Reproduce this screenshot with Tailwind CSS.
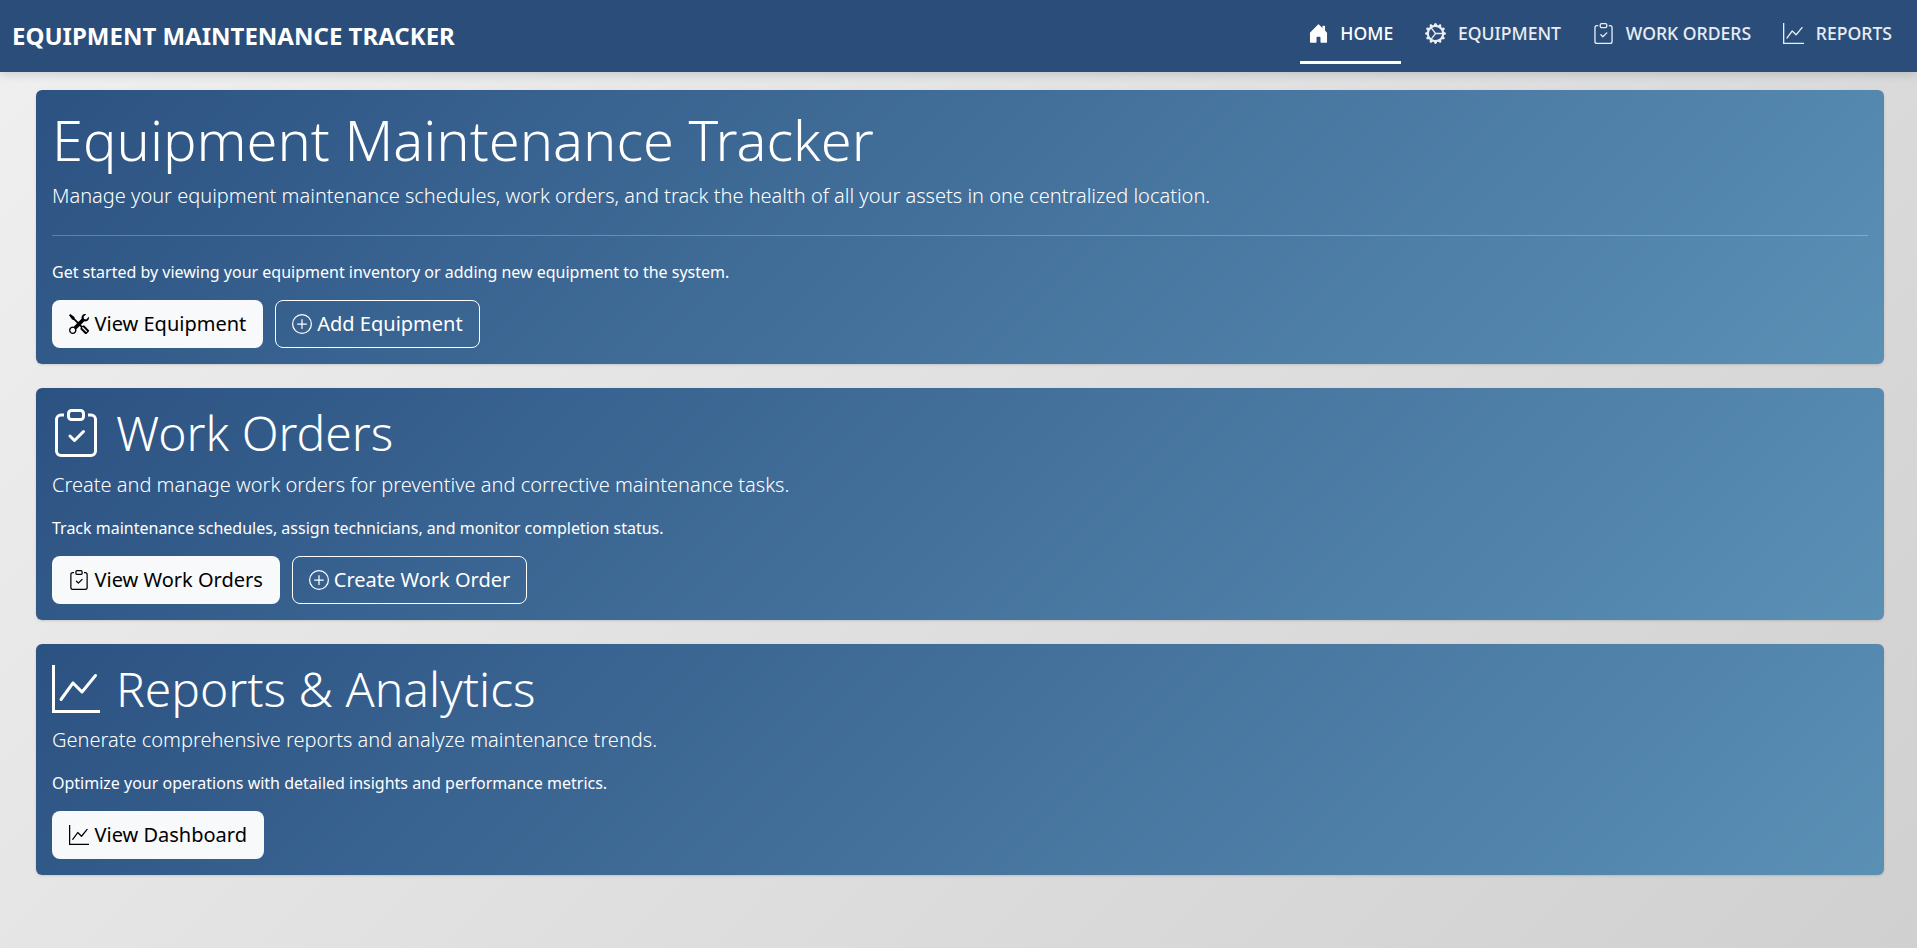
<!DOCTYPE html>
<html lang="en">
<head>
  <meta charset="UTF-8" />
  <meta name="viewport" content="width=device-width, initial-scale=1.0" />
  <title>Equipment Maintenance Tracker</title>
  <script src="https://cdn.jsdelivr.net/npm/@tailwindcss/browser@4"></script>
</head>
<body class="min-h-screen bg-[linear-gradient(135deg,#f0f0f0,#d0d0d0)] font-['Noto_Sans',sans-serif] text-white">
  <!-- top bar -->
  <nav class="flex h-[72px] items-center justify-between bg-[#2a4d7a] pl-3 pr-[17px] shadow-[0_2px_10px_rgba(0,0,0,0.15)]">
    <a class="text-2xl font-bold uppercase" href="#">Equipment Maintenance Tracker</a>
    <div class="flex gap-4">
      <a class="flex h-14 items-center gap-[11.75px] border-b-[3px] border-white px-2 pb-[2px] text-[17.6px] font-medium" href="#">
        <svg class="h-[21px] w-[21px]" viewBox="0 0 16 16" fill="currentColor"><path d="M6.5 14.5v-3.505c0-.245.25-.495.5-.495h2c.25 0 .5.25.5.5v3.5a.5.5 0 0 0 .5.5h4a.5.5 0 0 0 .5-.5v-7a.5.5 0 0 0-.146-.354L13 5.793V2.5a.5.5 0 0 0-.5-.5h-1a.5.5 0 0 0-.5.5v1.293L8.354 1.146a.5.5 0 0 0-.708 0l-6 6A.5.5 0 0 0 1.5 7.5v7a.5.5 0 0 0 .5.5h4a.5.5 0 0 0 .5-.5Z"/></svg>
        HOME
      </a>
      <a class="flex h-14 items-center gap-[11.75px] border-b-[3px] border-transparent px-2 pb-[2px] text-[17.6px] font-medium text-white/90" href="#">
        <svg class="h-[21px] w-[21px]" viewBox="0 0 16 16" fill="currentColor"><path d="M7.068.727c.243-.97 1.62-.97 1.864 0l.071.286a.96.96 0 0 0 1.622.434l.205-.211c.695-.719 1.888-.03 1.613.931l-.08.284a.96.96 0 0 0 1.187 1.187l.283-.081c.96-.275 1.65.918.931 1.613l-.211.205a.96.96 0 0 0 .434 1.622l.286.071c.97.243.97 1.62 0 1.864l-.286.071a.96.96 0 0 0-.434 1.622l.211.205c.719.695.03 1.888-.931 1.613l-.284-.08a.96.96 0 0 0-1.187 1.187l.081.283c.275.96-.918 1.65-1.613.931l-.205-.211a.96.96 0 0 0-1.622.434l-.071.286c-.243.97-1.62.97-1.864 0l-.071-.286a.96.96 0 0 0-1.622-.434l-.205.211c-.695.719-1.888.03-1.613-.931l.08-.284a.96.96 0 0 0-1.186-1.187l-.284.081c-.96.275-1.65-.918-.931-1.613l.211-.205a.96.96 0 0 0-.434-1.622l-.286-.071c-.97-.243-.97-1.62 0-1.864l.286-.071a.96.96 0 0 0 .434-1.622l-.211-.205c-.719-.695-.03-1.888.931-1.613l.284.08a.96.96 0 0 0 1.187-1.186l-.081-.284c-.275-.96.918-1.65 1.613-.931l.205.211a.96.96 0 0 0 1.622-.434l.071-.286zM12.973 8.5H8.25l-2.834 3.779A4.998 4.998 0 0 0 12.973 8.5zm0-1a4.998 4.998 0 0 0-7.557-3.779l2.834 3.78h4.723zM5.048 3.967c-.03.021-.058.043-.087.065l.087-.065zm-.431.355A4.984 4.984 0 0 0 3.002 8c0 1.455.622 2.765 1.615 3.678L7.375 8 4.617 4.322zm.344 7.646.087.065-.087-.065z"/></svg>
        EQUIPMENT
      </a>
      <a class="flex h-14 items-center gap-[11.75px] border-b-[3px] border-transparent px-2 pb-[2px] text-[17.6px] font-medium text-white/90" href="#">
        <svg class="h-[21px] w-[21px]" viewBox="0 0 16 16" fill="currentColor"><path fill-rule="evenodd" d="M10.854 7.146a.5.5 0 0 1 0 .708l-3 3a.5.5 0 0 1-.708 0l-1.5-1.5a.5.5 0 1 1 .708-.708L7.5 9.793l2.646-2.647a.5.5 0 0 1 .708 0z"/><path d="M4 1.5H3a2 2 0 0 0-2 2V14a2 2 0 0 0 2 2h10a2 2 0 0 0 2-2V3.5a2 2 0 0 0-2-2h-1v1h1a1 1 0 0 1 1 1V14a1 1 0 0 1-1 1H3a1 1 0 0 1-1-1V3.5a1 1 0 0 1 1-1h1v-1z"/><path d="M9.5 1a.5.5 0 0 1 .5.5v1a.5.5 0 0 1-.5.5h-3a.5.5 0 0 1-.5-.5v-1a.5.5 0 0 1 .5-.5h3zm-3-1A1.5 1.5 0 0 0 5 1.5v1A1.5 1.5 0 0 0 6.5 4h3A1.5 1.5 0 0 0 11 2.5v-1A1.5 1.5 0 0 0 9.5 0h-3z"/></svg>
        WORK ORDERS
      </a>
      <a class="flex h-14 items-center gap-[11.75px] border-b-[3px] border-transparent px-2 pb-[2px] text-[17.6px] font-medium text-white/90" href="#">
        <svg class="h-[21px] w-[21px]" viewBox="0 0 16 16" fill="currentColor"><path fill-rule="evenodd" d="M0 0h1v15h15v1H0V0Zm14.817 3.113a.5.5 0 0 1 .07.704l-4.5 5.5a.5.5 0 0 1-.74.037L7.06 6.767l-3.656 5.027a.5.5 0 0 1-.808-.588l4-5.5a.5.5 0 0 1 .758-.06l2.609 2.61 4.15-5.073a.5.5 0 0 1 .704-.07Z"/></svg>
        REPORTS
      </a>
    </div>
  </nav>

  <main class="flex flex-col gap-6 pl-9 pr-[33px] pt-[18px]">
    <!-- intro -->
    <section class="rounded-md bg-[linear-gradient(135deg,#2c5282,#5b90b5)] p-4 shadow-sm">
      <h1 class="mb-2 text-[56px] leading-[1.2] font-light">Equipment Maintenance Tracker</h1>
      <p class="text-xl leading-normal font-light">Manage your equipment maintenance schedules, work orders, and track the health of all your assets in one centralized location.</p>
      <hr class="my-6 border-white/25" />
      <p class="mb-4 leading-normal">Get started by viewing your equipment inventory or adding new equipment to the system.</p>
      <div class="flex gap-3">
        <a class="inline-flex h-12 items-center gap-[5.5px] rounded-lg bg-[#f8f9fa] px-[17px] text-xl text-black" href="#">
          <svg class="h-5 w-5" viewBox="0 0 16 16" fill="currentColor"><path d="M1 0 0 1l2.2 3.081a1 1 0 0 0 .815.419h.07a1 1 0 0 1 .708.293l2.675 2.675-2.617 2.654A3.003 3.003 0 0 0 0 13a3 3 0 1 0 5.878-.851l2.654-2.617.968.968-.305.914a1 1 0 0 0 .242 1.023l3.27 3.27a.997.997 0 0 0 1.414 0l1.586-1.586a.997.997 0 0 0 0-1.414l-3.27-3.27a1 1 0 0 0-1.023-.242L10.5 9.5l-.96-.96 2.68-2.643A3.005 3.005 0 0 0 16 3c0-.269-.035-.53-.102-.777l-2.14 2.141L12 4l-.364-1.757L13.777.102a3 3 0 0 0-3.675 3.68L7.462 6.46 4.793 3.793a1 1 0 0 1-.293-.707v-.071a1 1 0 0 0-.419-.814L1 0Zm9.646 10.646a.5.5 0 0 1 .708 0l2.914 2.915a.5.5 0 0 1-.707.707l-2.915-2.914a.5.5 0 0 1 0-.708ZM3 11l.471.242.529.026.287.445.445.287.026.529L5 13l-.242.471-.026.529-.445.287-.287.445-.529.026L3 15l-.471-.242L2 14.732l-.287-.445L1.268 14l-.026-.529L1 13l.242-.471.026-.529.445-.287.287-.445.529-.026L3 11Z"/></svg>
          View Equipment
        </a>
        <a class="inline-flex h-12 items-center gap-[5px] rounded-lg border border-white px-4 text-xl" href="#">
          <svg class="h-5 w-5" viewBox="0 0 16 16" fill="currentColor"><path d="M8 15A7 7 0 1 1 8 1a7 7 0 0 1 0 14zm0 1A8 8 0 1 0 8 0a8 8 0 0 0 0 16z"/><path d="M8 4a.5.5 0 0 1 .5.5v3h3a.5.5 0 0 1 0 1h-3v3a.5.5 0 0 1-1 0v-3h-3a.5.5 0 0 1 0-1h3v-3A.5.5 0 0 1 8 4z"/></svg>
          Add Equipment
        </a>
      </div>
    </section>

    <!-- work orders -->
    <section class="rounded-md bg-[linear-gradient(135deg,#2c5282,#5b90b5)] p-4 shadow-sm">
      <h2 class="mb-2 flex items-center gap-4 text-5xl leading-[1.2] font-light">
        <svg class="h-12 w-12" viewBox="0 0 16 16" fill="currentColor"><path fill-rule="evenodd" d="M10.854 7.146a.5.5 0 0 1 0 .708l-3 3a.5.5 0 0 1-.708 0l-1.5-1.5a.5.5 0 1 1 .708-.708L7.5 9.793l2.646-2.647a.5.5 0 0 1 .708 0z"/><path d="M4 1.5H3a2 2 0 0 0-2 2V14a2 2 0 0 0 2 2h10a2 2 0 0 0 2-2V3.5a2 2 0 0 0-2-2h-1v1h1a1 1 0 0 1 1 1V14a1 1 0 0 1-1 1H3a1 1 0 0 1-1-1V3.5a1 1 0 0 1 1-1h1v-1z"/><path d="M9.5 1a.5.5 0 0 1 .5.5v1a.5.5 0 0 1-.5.5h-3a.5.5 0 0 1-.5-.5v-1a.5.5 0 0 1 .5-.5h3zm-3-1A1.5 1.5 0 0 0 5 1.5v1A1.5 1.5 0 0 0 6.5 4h3A1.5 1.5 0 0 0 11 2.5v-1A1.5 1.5 0 0 0 9.5 0h-3z"/></svg>
        Work Orders
      </h2>
      <p class="mb-4 text-xl leading-normal font-light">Create and manage work orders for preventive and corrective maintenance tasks.</p>
      <p class="mb-4 leading-normal">Track maintenance schedules, assign technicians, and monitor completion status.</p>
      <div class="flex gap-3">
        <a class="inline-flex h-12 items-center gap-[5.5px] rounded-lg bg-[#f8f9fa] px-[17px] text-xl text-black" href="#">
          <svg class="h-5 w-5" viewBox="0 0 16 16" fill="currentColor"><path fill-rule="evenodd" d="M10.854 7.146a.5.5 0 0 1 0 .708l-3 3a.5.5 0 0 1-.708 0l-1.5-1.5a.5.5 0 1 1 .708-.708L7.5 9.793l2.646-2.647a.5.5 0 0 1 .708 0z"/><path d="M4 1.5H3a2 2 0 0 0-2 2V14a2 2 0 0 0 2 2h10a2 2 0 0 0 2-2V3.5a2 2 0 0 0-2-2h-1v1h1a1 1 0 0 1 1 1V14a1 1 0 0 1-1 1H3a1 1 0 0 1-1-1V3.5a1 1 0 0 1 1-1h1v-1z"/><path d="M9.5 1a.5.5 0 0 1 .5.5v1a.5.5 0 0 1-.5.5h-3a.5.5 0 0 1-.5-.5v-1a.5.5 0 0 1 .5-.5h3zm-3-1A1.5 1.5 0 0 0 5 1.5v1A1.5 1.5 0 0 0 6.5 4h3A1.5 1.5 0 0 0 11 2.5v-1A1.5 1.5 0 0 0 9.5 0h-3z"/></svg>
          View Work Orders
        </a>
        <a class="inline-flex h-12 items-center gap-[5px] rounded-lg border border-white px-4 text-xl" href="#">
          <svg class="h-5 w-5" viewBox="0 0 16 16" fill="currentColor"><path d="M8 15A7 7 0 1 1 8 1a7 7 0 0 1 0 14zm0 1A8 8 0 1 0 8 0a8 8 0 0 0 0 16z"/><path d="M8 4a.5.5 0 0 1 .5.5v3h3a.5.5 0 0 1 0 1h-3v3a.5.5 0 0 1-1 0v-3h-3a.5.5 0 0 1 0-1h3v-3A.5.5 0 0 1 8 4z"/></svg>
          Create Work Order
        </a>
      </div>
    </section>

    <!-- reports -->
    <section class="rounded-md bg-[linear-gradient(135deg,#2c5282,#5b90b5)] p-4 shadow-sm">
      <h2 class="mb-2 flex items-center gap-4 text-5xl leading-[1.2] font-light">
        <svg class="h-12 w-12" viewBox="0 0 16 16" fill="currentColor"><path fill-rule="evenodd" d="M0 0h1v15h15v1H0V0Zm14.817 3.113a.5.5 0 0 1 .07.704l-4.5 5.5a.5.5 0 0 1-.74.037L7.06 6.767l-3.656 5.027a.5.5 0 0 1-.808-.588l4-5.5a.5.5 0 0 1 .758-.06l2.609 2.61 4.15-5.073a.5.5 0 0 1 .704-.07Z"/></svg>
        Reports &amp; Analytics
      </h2>
      <p class="mb-4 text-xl leading-normal font-light">Generate comprehensive reports and analyze maintenance trends.</p>
      <p class="mb-4 leading-normal">Optimize your operations with detailed insights and performance metrics.</p>
      <div class="flex gap-3">
        <a class="inline-flex h-12 items-center gap-[5.5px] rounded-lg bg-[#f8f9fa] px-[17px] text-xl text-black" href="#">
          <svg class="h-5 w-5" viewBox="0 0 16 16" fill="currentColor"><path fill-rule="evenodd" d="M0 0h1v15h15v1H0V0Zm14.817 3.113a.5.5 0 0 1 .07.704l-4.5 5.5a.5.5 0 0 1-.74.037L7.06 6.767l-3.656 5.027a.5.5 0 0 1-.808-.588l4-5.5a.5.5 0 0 1 .758-.06l2.609 2.61 4.15-5.073a.5.5 0 0 1 .704-.07Z"/></svg>
          View Dashboard
        </a>
      </div>
    </section>
  </main>
</body>
</html>
